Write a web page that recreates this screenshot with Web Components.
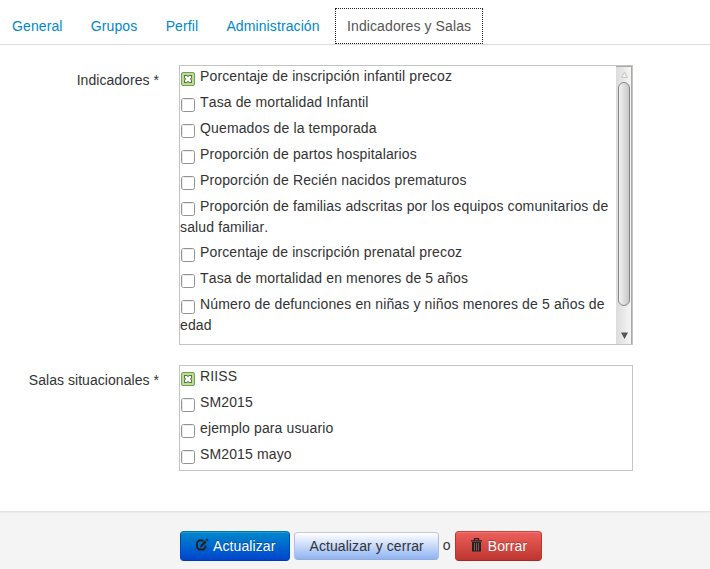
<!DOCTYPE html>
<html lang="es">
<head>
<meta charset="utf-8">
<title>Indicadores y Salas</title>
<style>
body{margin:0;width:710px;height:569px;overflow:hidden;background:#fff;color:#333;font:14px/20px "Liberation Sans",Arial,sans-serif;letter-spacing:.1px;font-kerning:none}
</style>
</head>
<body>
<user-page></user-page>
<script>
const define = (name, html, setup) => {
  const t = document.createElement('template');
  t.innerHTML = html;
  customElements.define(name, class extends HTMLElement {
    connectedCallback() {
      if (this.shadowRoot) return;
      this.attachShadow({mode: 'open'}).append(t.content.cloneNode(true));
      if (setup) setup(this);
    }
  });
};

define('nav-tabs', `<style>
:host{display:flex;box-sizing:border-box;height:45px;padding-top:8px;gap:2.3px;border-bottom:1px solid #ddd}
</style><slot></slot>`);

define('nav-tab', `<style>
:host{display:block;box-sizing:border-box;height:36px;padding:8px 12px;border:0 solid transparent;border-width:0 1px;margin-left:0;color:#0088cc;white-space:nowrap}
:host(:first-child){margin-left:-1px}
:host([active]){color:#555;background:#fff;border:1px dotted #222;padding:7px 11px 7px 11.3px;margin-left:-.2px;height:36px}
</style><slot></slot>`);

define('form-row', `<style>
:host{display:flex;align-items:flex-start;margin-bottom:20px}
.l{width:159px;margin-right:20px;padding-top:5px;text-align:right;white-space:nowrap;letter-spacing:.05px}
</style><div class="l"></div><slot></slot>`, el => {
  el.shadowRoot.querySelector('.l').textContent = el.getAttribute('label');
});

define('check-list', `<style>
:host{display:flex;box-sizing:border-box;width:454px;border:1px solid #c4c4c4;overflow:hidden;letter-spacing:.13px}
.items{flex:1;min-width:0}
</style><div class="items"><slot></slot></div><slot name="bar"></slot>`);

define('check-item', `<style>
:host{display:block;margin-bottom:5px}
i{display:inline-block;width:14px;height:14px;margin:0 1px 1px 1px;vertical-align:-6px}
svg{display:block}
.on{display:none}
:host([checked]) .on{display:block}
:host([checked]) .off{display:none}
</style><i><svg class="off" width="14" height="14" viewBox="0 0 14 14"><rect x=".5" y=".5" width="13" height="13" rx="2" fill="#fff" stroke="#929292"/><path d="M1.500 12.500v-11h11" fill="none" stroke="#ebebeb"/></svg><svg class="on" width="14" height="14" viewBox="0 0 14 14"><rect x=".5" y=".5" width="13" height="13" rx="1.500" fill="#b8de92" stroke="#769e58"/><path d="M3 3h3l1 1 1-1h3v3l-1 1 1 1v3H8l-1-1-1 1H3V8l1-1-1-1z" fill="#5b7447"/><path d="M4 4h1.800L7 5.200 8.200 4H10v1.800L8.800 7 10 8.200V10H8.200L7 8.800 5.800 10H4V8.200L5.200 7 4 5.800z" fill="#fff"/></svg></i> <slot></slot>`);

define('scroll-bar', `<style>
:host{display:flex;flex-direction:column;align-items:center;box-sizing:border-box;width:16px;height:100%;border-right:1px solid #aaa9a2;border-top:1px solid #aaa9a2;background:linear-gradient(90deg,#dcdcdc,#f5f5f5)}
svg{display:block;flex:none}
.thumb{box-sizing:border-box;width:12px;height:224px;margin-left:1px;border:1px solid #858585;border-radius:6px;background:linear-gradient(90deg,#f3f3f3,#c6c6c6)}
.sp{flex:1}
</style><svg width="15" height="15"><path d="M5.500 10.500L8.500 5l3 5.500z" fill="#eee" stroke="#c8c8c8"/></svg><div class="thumb"></div><div class="sp"></div><svg width="15" height="16"><path d="M5 4.500h7l-3.500 6.500z" fill="#555"/></svg>`);

define('form-actions', `<style>
:host{display:flex;box-sizing:border-box;height:58px;padding:19px 0 0 180px;gap:4px;border-top:1px solid #e3e3e3;box-shadow:inset 0 1px #ececec;background:#f4f4f4;align-items:flex-start}
</style><slot></slot>`);

define('action-button', `<style>
:host{display:flex;box-sizing:border-box;height:30px;padding:4px 14px;align-items:flex-start;gap:4px;border:1px solid #bbb;border-radius:4px;white-space:nowrap}
:host([kind=primary]){color:#fff;text-shadow:0 -1px rgba(0,0,0,.25);background:linear-gradient(#0088cc,#0044cc);border-color:#0074b5 #0048b8 #003ba8;box-shadow:inset 0 1px rgba(255,255,255,.15)}
:host([kind=danger]){color:#fff;text-shadow:0 -1px rgba(0,0,0,.25);background:linear-gradient(#ee5f5b,#bd362f);border-color:#c9433f #b5352f #a12a25;box-shadow:inset 0 1px rgba(255,255,255,.15)}
:host([kind=light]){height:28px;padding-top:3px;margin-top:1px;letter-spacing:.08px;background:linear-gradient(#fff,#8fb4f3);border-color:#c8c8d0 #b3bdd3 #96acd6}
</style><slot name="icon"></slot><span><slot></slot></span>`);

define('icon-glyph', `<style>:host{display:block;width:14px;height:14px;margin-top:2px}svg{display:none}
:host([name=edit]) .edit,:host([name=trash]) .trash{display:block}</style>
<svg class="edit" width="14" height="14" viewBox="0 0 14 14"><path d="M8.500 2.500H4L2 4.500V9.500L4 11.500H8.500L10.500 9.500V7.500" fill="none" stroke="#222" stroke-width="1.800"/><path d="M5 9.500l.6-2.600L10 2.300l1.800 1.800-4.500 4.500z" fill="#222"/><path d="M10.700 1.300L11.800.4l1.800 1.800-1 1z" fill="#222"/></svg>
<svg class="trash" width="14" height="14" viewBox="0 0 14 14"><path d="M4.500 2.500V.7h4v1.800M1 2.800h11" fill="none" stroke="#222" stroke-width="1.300"/><path d="M2 4h9v9.500H2z" fill="#222"/><path d="M4.500 5v7.500M6.500 5v7.500M8.500 5v7.500" stroke="#8d5a58" stroke-width=".9"/></svg>`);

define('user-page', `<style>
:host{display:flex;flex-direction:column;height:569px}
main{flex:1;padding-top:20px}
.big{height:280px}.small{height:106px}
.o{padding-top:4px}
</style>
<nav-tabs><nav-tab>General</nav-tab><nav-tab>Grupos</nav-tab><nav-tab>Perfil</nav-tab><nav-tab>Administración</nav-tab><nav-tab active>Indicadores y Salas</nav-tab></nav-tabs>
<main>
<form-row label="Indicadores *"><check-list class="big">
<check-item checked>Porcentaje de inscripción infantil precoz</check-item>
<check-item>Tasa de mortalidad Infantil</check-item>
<check-item>Quemados de la temporada</check-item>
<check-item>Proporción de partos hospitalarios</check-item>
<check-item>Proporción de Recién nacidos prematuros</check-item>
<check-item>Proporción de familias adscritas por los equipos comunitarios de salud familiar.</check-item>
<check-item>Porcentaje de inscripción prenatal precoz</check-item>
<check-item>Tasa de mortalidad en menores de 5 años</check-item>
<check-item>Número de defunciones en niñas y niños menores de 5 años de edad</check-item>
<scroll-bar slot="bar"></scroll-bar></check-list></form-row>
<form-row label="Salas situacionales *"><check-list class="small">
<check-item checked>RIISS</check-item>
<check-item>SM2015</check-item>
<check-item>ejemplo para usuario</check-item>
<check-item>SM2015 mayo</check-item>
</check-list></form-row>
</main>
<form-actions>
<action-button kind="primary"><icon-glyph slot="icon" name="edit"></icon-glyph>Actualizar</action-button>
<action-button kind="light">Actualizar y cerrar</action-button>
<span class="o">o</span>
<action-button kind="danger"><icon-glyph slot="icon" name="trash"></icon-glyph>Borrar</action-button>
</form-actions>`);
</script>
</body>
</html>
